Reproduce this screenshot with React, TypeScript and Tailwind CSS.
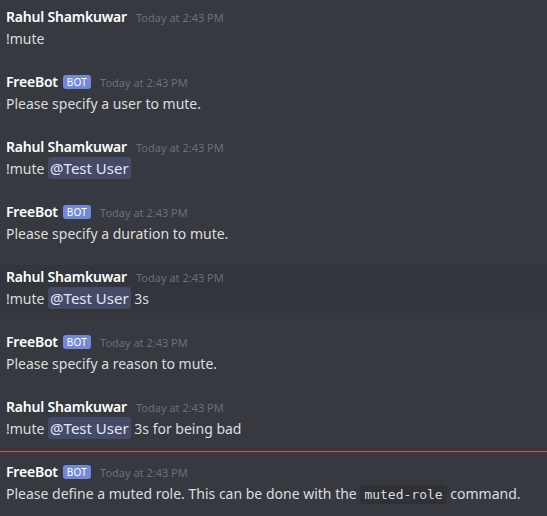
import React from "react";

type Part = string | { mention: string } | { code: string };

type Msg = {
  name: string;
  bot?: boolean;
  parts: Part[];
  hover?: boolean;
  dividerBefore?: boolean;
};

const msgs: Msg[] = [
  { name: "Rahul Shamkuwar", parts: ["!mute"] },
  { name: "FreeBot", bot: true, parts: ["Please specify a user to mute."] },
  { name: "Rahul Shamkuwar", parts: ["!mute ", { mention: "@Test User" }] },
  { name: "FreeBot", bot: true, parts: ["Please specify a duration to mute."] },
  { name: "Rahul Shamkuwar", parts: ["!mute ", { mention: "@Test User" }, " 3s"], hover: true },
  { name: "FreeBot", bot: true, parts: ["Please specify a reason to mute."] },
  { name: "Rahul Shamkuwar", parts: ["!mute ", { mention: "@Test User" }, " 3s for being bad"] },
  {
    name: "FreeBot",
    bot: true,
    dividerBefore: true,
    parts: ["Please define a muted role. This can be done with the ", { code: "muted-role" }, " command."],
  },
];

function Message({ m }: { m: Msg }) {
  return (
    <div className={`h-[48px] px-[6px] pt-[1px] ${m.hover ? "bg-[#32353b]" : ""}`}>
      <div className="flex items-center h-[22px]">
        <span className="text-[14px] font-semibold text-white leading-[22px] tracking-[-0.2px]">{m.name}</span>
        {m.bot && (
          <span className="ml-[5px] bg-[#7289da] text-white text-[10px] leading-[14px] px-[4px] rounded-[3px] tracking-[0.2px]">
            BOT
          </span>
        )}
        <span className="ml-[9px] text-[11px] text-[#6b6f76] leading-[22px] pt-[2px]">Today at 2:43 PM</span>
      </div>
      <div className="text-[14px] leading-[21px] text-[#dcddde] whitespace-pre">
        {m.parts.map((p, i) => {
          if (typeof p === "string") return <span key={i}>{p}</span>;
          if ("mention" in p)
            return (
              <span key={i} className="bg-[#444b66] text-[#e3e6f5] text-[15px] rounded-[3px] px-[2px] py-[1px]">
                {p.mention}
              </span>
            );
          return (
            <span
              key={i}
              className="bg-[#2f3136] text-[#dcddde] rounded-[3px] px-[4px] py-[2px] text-[13px]"
              style={{ fontFamily: '"DejaVu Sans Mono", monospace' }}
            >
              {p.code}
            </span>
          );
        })}
      </div>
    </div>
  );
}

export default function App() {
  return (
    <div
      className="w-[547px] h-[516px] bg-[#36393f] overflow-hidden pt-[5px] flex flex-col"
      style={{ fontFamily: '"Noto Sans", "Open Sans", sans-serif' }}
    >
      {msgs.map((m, i) => (
        <React.Fragment key={i}>
          {m.dividerBefore ? (
            <div className="h-[17px] flex items-center">
              <div className="w-full h-px bg-[#f04747]" />
            </div>
          ) : i > 0 ? (
            <div className="h-[17px]" />
          ) : null}
          <Message m={m} />
        </React.Fragment>
      ))}
    </div>
  );
}
